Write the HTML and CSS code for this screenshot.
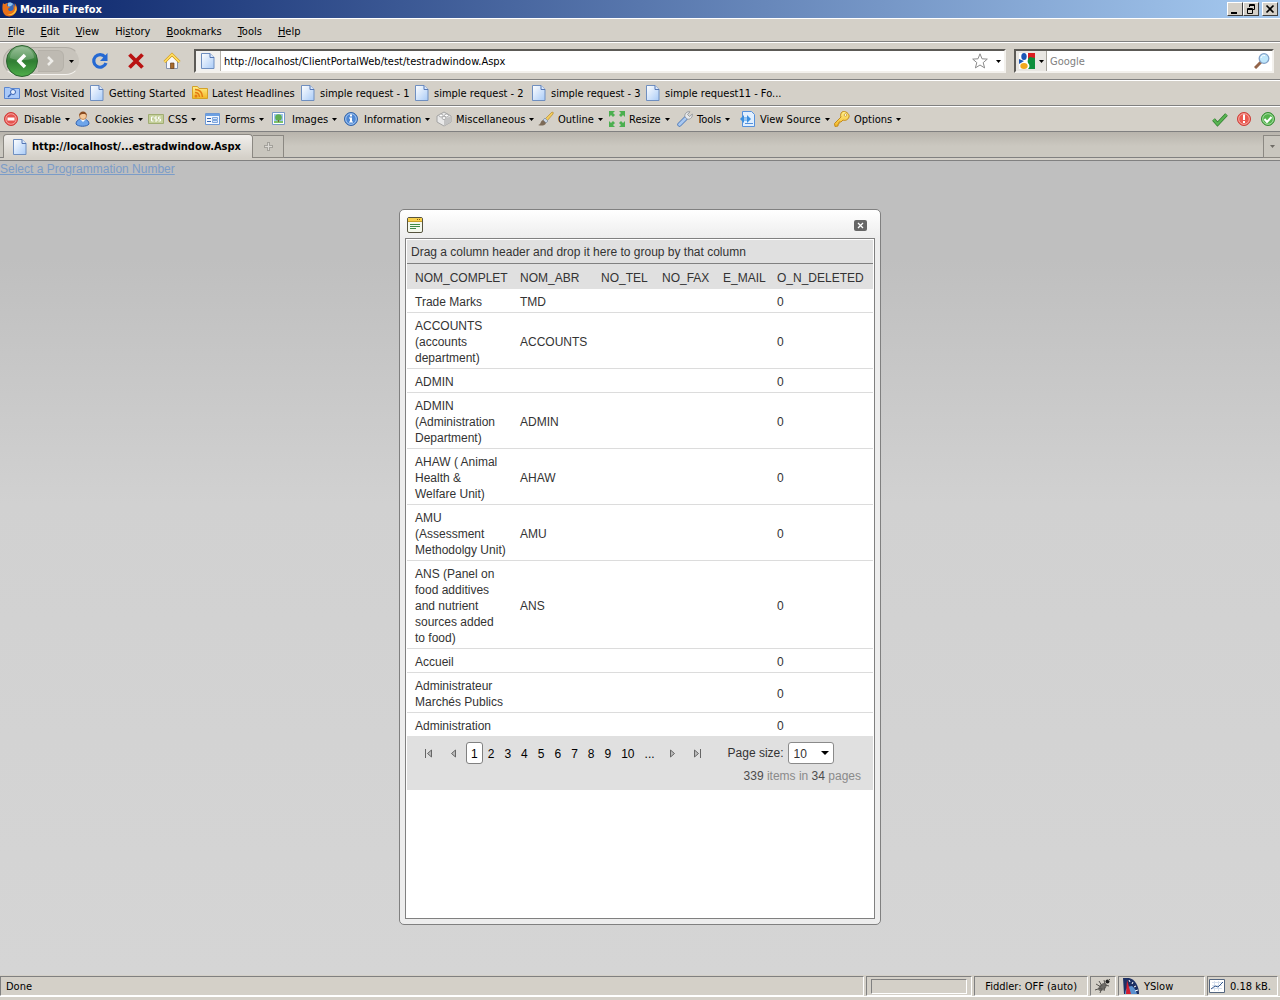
FILE: index.html
```html
<!DOCTYPE html>
<html lang="en">
<head>
    <meta charset="UTF-8">
    <meta name="viewport" content="width=device-width, initial-scale=1.0">
    <title>Mozilla Firefox</title>
    <link rel="stylesheet" href="styles.css">
</head>
<body>
    <!-- shared icons -->
    <svg class="sprite" aria-hidden="true">
        <defs>
            <linearGradient id="g-page" x1="0" y1="0" x2="1" y2="1">
                <stop offset="0" stop-color="#ffffff"/><stop offset="1" stop-color="#a9cbf7"/>
            </linearGradient>
            <linearGradient id="g-green" x1="0" y1="0" x2="0" y2="1">
                <stop offset="0" stop-color="#86b586"/><stop offset=".5" stop-color="#2f7d32"/><stop offset="1" stop-color="#4fae4b"/>
            </linearGradient>
            <linearGradient id="g-gold" x1="0" y1="0" x2="0" y2="1">
                <stop offset="0" stop-color="#fff08a"/><stop offset="1" stop-color="#f3b524"/>
            </linearGradient>
        </defs>
        <symbol id="i-page" viewBox="0 0 16 16">
            <path d="M1.500.5h8.500l4 4v11h-12.500z" fill="url(#g-page)" stroke="#6f8fc0"/>
            <path d="M10 .5v4h4" fill="#dbe9fd" stroke="#5577b5"/>
        </symbol>
        <symbol id="i-down" viewBox="0 0 5 3"><path d="M0 0h5L2.500 3z"/></symbol>
    </svg>

    <!-- title bar -->
    <header class="title-bar">
        <svg class="icon" viewBox="0 0 16 16">
            <circle cx="8" cy="8" r="6.500" fill="#3568b8"/>
            <path d="M6 2c2-1 4 0 5 1l-2 2-3 1z" fill="#8fc3ee"/>
            <path d="M1 2c1 1 1 1 2 1 1-1 2-1 3-1-1 1-1 2-1 3l3 1c0 1-2 1-2 2 0 2 3 3 5 1 1-1 1-3 0-5 2 1 2 2 2 3 1-2 0-4-1-5 3 2 4 6 2 9-2 4-7 6-11 3C0 11 0 6 1 2z" fill="#e8701a"/>
            <path d="M13 4c2 3 2 6 0 8-2 2-5 3-8 1 4 1 7-1 8-4 1-2 0-4 0-5z" fill="#fbc53b"/>
        </svg>
        <span class="title-text">Mozilla Firefox</span>
        <button class="win-btn" aria-label="Minimize"><svg viewBox="0 0 12 10"><path d="M2 8h6v2H2z"/></svg></button>
        <button class="win-btn" aria-label="Restore"><svg viewBox="0 0 12 10"><path d="M4.500 3V.5h5v5H8M4 1.500h6M2.500 4.500h5v5h-5zM2 5.500h6" fill="none" stroke="#000"/></svg></button>
        <button class="win-btn win-close" aria-label="Close"><svg viewBox="0 0 12 10"><path d="M2.500 1.500l7 7M9.500 1.500l-7 7" stroke="#000" stroke-width="1.700"/></svg></button>
    </header>

    <!-- menu bar -->
    <nav class="bar menu-bar">
        <span><u>F</u>ile</span>
        <span><u>E</u>dit</span>
        <span><u>V</u>iew</span>
        <span>Hi<u>s</u>tory</span>
        <span><u>B</u>ookmarks</span>
        <span><u>T</u>ools</span>
        <span><u>H</u>elp</span>
    </nav>

    <!-- navigation bar -->
    <div class="bar nav-bar">
        <div class="history-btns">
            <button class="back" aria-label="Back"><svg viewBox="0 0 32 32">
                <circle cx="16" cy="16" r="15.500" fill="url(#g-green)" stroke="#2c6230"/>
                <path d="M4 13a12 11 0 0 1 24 0c-8 3-16 3-24 0z" fill="#fff" opacity=".2"/>
                <path d="M19 10l-6 6 6 6" fill="none" stroke="#fff" stroke-width="3.500"/></svg></button>
            <button class="forward" aria-label="Forward"><svg viewBox="0 0 10 12"><path d="M2 2l4 4-4 4" fill="none" stroke="#eeede9" stroke-width="2.500"/></svg></button>
            <button class="drop" aria-label="Recent pages"><svg viewBox="0 0 5 3"><path d="M0 0h5L2.500 3z"/></svg></button>
        </div>
        <button class="nav-btn" aria-label="Reload"><svg viewBox="0 0 18 18">
            <path d="M14 5A6.300 6.300 0 1 0 15 11" fill="none" stroke="#2569d3" stroke-width="3.200"/><path d="M16.500 1v8H9z" fill="#2569d3"/></svg></button>
        <button class="nav-btn" aria-label="Stop"><svg viewBox="0 0 18 18">
            <path d="M2.500 2.500l13 13M15.500 2.500l-13 13" stroke="#b91212" stroke-width="3.800"/></svg></button>
        <button class="nav-btn" aria-label="Home"><svg viewBox="0 0 18 18">
            <path d="M3.500 9L9 4l5.500 5v7.500h-11z" fill="#f7f7fb" stroke="#8593ad"/>
            <path d="M7.500 11h3.500v5.500H7.500z" fill="#a86b2d" stroke="#6c411b" stroke-width=".7"/>
            <path d="M1.500 10L9 2.500 16.500 10" fill="none" stroke="#d39a1c" stroke-width="3"/><path d="M1.500 10L9 2.500 16.500 10" fill="none" stroke="#ffdf62" stroke-width="1.700"/></svg></button>
        <div class="field url-field">
            <span class="site-icon"><svg class="icon"><use href="#i-page"/></svg></span>
            <input type="text" aria-label="Address" value="http://localhost/ClientPortalWeb/test/testradwindow.Aspx">
            <svg class="icon star" viewBox="0 0 16 16"><path d="M8 .8l2 5 5.300.3-4.100 3.500 1.400 5.300L8 12l-4.600 2.900 1.400-5.300L.7 6.100 6 5.800z" fill="#fff" stroke="#8b8b8b"/></svg>
            <button class="drop" aria-label="Show history"><svg viewBox="0 0 5 3"><path d="M0 0h5L2.500 3z"/></svg></button>
        </div>
        <div class="field search-field">
            <button class="engine" aria-label="Search engine">
                <svg class="icon" viewBox="0 0 16 16">
                    <path d="M0 0h16v16H0z" fill="#fff"/>
                    <path d="M9 0h7v6H9z" fill="#dc1c20"/><path d="M16 5v11H9c2-2 2-4 0-6-1-2 0-5 2-6z" fill="#0d8f3c"/>
                    <ellipse cx="5" cy="3.500" rx="2.700" ry="3.500" fill="#1b55b5"/><path d="M0 6l5 2-5 3z" fill="#1b55b5"/>
                    <ellipse cx="5" cy="13" rx="3.700" ry="3" fill="#f2a81d"/>
                </svg>
                <svg class="arrow"><use href="#i-down"/></svg>
            </button>
            <input type="text" aria-label="Search" placeholder="Google">
            <svg class="icon lens" viewBox="0 0 16 16"><path d="M1 15l6-6" stroke="#936449" stroke-width="3"/><circle cx="10" cy="5.500" r="4.800" fill="#bfe7fb" stroke="#83a2c8" stroke-width="1.300"/><path d="M7 5a3 3 0 0 1 4-2.500" stroke="#fff" fill="none"/></svg>
        </div>
    </div>

    <!-- bookmarks -->
    <nav class="bar bookmarks">
        <button><svg class="icon" viewBox="0 0 16 16"><path d="M.5 2.500h5l1.500 1h8.500v10H.5z" fill="#a9c9f8" stroke="#5b86cf"/><circle cx="9" cy="7" r="2.500" fill="#e7f1fe" stroke="#3864b5"/><path d="M7 9l-3 3" stroke="#3864b5" stroke-width="1.500"/></svg>Most Visited</button>
        <button><svg class="icon"><use href="#i-page"/></svg>Getting Started</button>
        <button><svg class="icon" viewBox="0 0 16 16"><path d="M.5 1.500h5l1.500 2h8.500v10H.5z" fill="url(#g-gold)" stroke="#d4a128"/><circle cx="4" cy="11" r="1.500" fill="#e47a13"/><path d="M3 7.500q4 0 4.500 4.500M3 4.500q7 0 7.500 7.500" fill="none" stroke="#e47a13" stroke-width="1.500"/></svg>Latest Headlines</button>
        <button><svg class="icon"><use href="#i-page"/></svg>simple request - 1</button>
        <button><svg class="icon"><use href="#i-page"/></svg>simple request - 2</button>
        <button><svg class="icon"><use href="#i-page"/></svg>simple request - 3</button>
        <button><svg class="icon"><use href="#i-page"/></svg>simple request11 - Fo...</button>
    </nav>

    <!-- web developer toolbar -->
    <div class="bar dev-bar">
        <button><svg class="icon" viewBox="0 0 16 16"><circle cx="7" cy="8" r="6.500" fill="#e65450" stroke="#cf3937"/><circle cx="7" cy="8" r="5.200" fill="none" stroke="#f5a29d"/><path d="M3.500 6.500h7v3h-7z" fill="#fff"/></svg>Disable<svg class="arrow"><use href="#i-down"/></svg></button>
        <button><svg class="icon" viewBox="0 0 16 16"><path d="M1 13c0-3 2-4 4-5h5c2 1 4 2 4 5-2 3-11 3-13 0z" fill="#6ea5ea" stroke="#3463b0"/><path d="M5 8l3 3 3-3z" fill="#fff"/><circle cx="8" cy="5" r="3.500" fill="#f5c898" stroke="#a96b3a" stroke-width=".7"/><path d="M4 5c0-6 8-6 8 0-1-2-2-2-3-2-2 0-3 0-5 2z" fill="#8a4b20"/></svg>Cookies<svg class="arrow"><use href="#i-down"/></svg></button>
        <button><svg class="icon" viewBox="0 0 16 16"><path d="M.5 3.500h15v9H.5z" fill="#c4cf9a" stroke="#a0ad72"/><path d="M5.500 6h-2v4h2M9 6H7v2h2v2H7M12.500 6h-2v2h2v2h-2" fill="none" stroke="#fff"/></svg>CSS<svg class="arrow"><use href="#i-down"/></svg></button>
        <button><svg class="icon" viewBox="0 0 16 16"><path d="M.5 2.500h14v11H.5z" fill="#f5f9ff" stroke="#6d98d4"/><path d="M1 3h13v2H1z" fill="#6ca0e2"/><path d="M2 7.500h4M2 10.500h4" stroke="#3565b2"/><path d="M7.500 6.500h5v2h-5zM7.500 9.500h5v2h-5z" fill="#d3e4fa" stroke="#7ea6dd"/></svg>Forms<svg class="arrow"><use href="#i-down"/></svg></button>
        <button><svg class="icon" viewBox="0 0 16 16"><path d="M.5 1.500h12v12H.5z" fill="#fff" stroke="#7899c8"/><path d="M2 3h9v9H2z" fill="#9cc4ed"/><circle cx="6.500" cy="6.500" r="3.300" fill="#5fae52"/><path d="M2 10h9v2H2z" fill="#7cc36a"/><path d="M6 9h1v2H6z" fill="#7b5c35"/></svg>Images<svg class="arrow"><use href="#i-down"/></svg></button>
        <button><svg class="icon" viewBox="0 0 16 16"><circle cx="7" cy="8" r="6.500" fill="#4f88d3" stroke="#3464a7"/><circle cx="7" cy="8" r="5.300" fill="none" stroke="#a6c8f3"/><path d="M6 3.500h2v2H6zM5 6.500h3v4h1v1H5v-1h1v-3H5z" fill="#fff"/></svg>Information<svg class="arrow"><use href="#i-down"/></svg></button>
        <button><svg class="icon" viewBox="0 0 16 16"><path d="M1 5l7-4 7 4v6l-7 4-7-4z" fill="#e9e9e9" stroke="#a3a3a3"/><path d="M8 8.500l7-3.500v6l-7 4z" fill="#c2c2c2"/><ellipse cx="5" cy="4.500" rx="2" ry="1.500" fill="#fff" stroke="#aaa"/><ellipse cx="10.500" cy="4.500" rx="2" ry="1.500" fill="#fff" stroke="#aaa"/><ellipse cx="8" cy="7" rx="2" ry="1.500" fill="#fff" stroke="#aaa"/></svg>Miscellaneous<svg class="arrow"><use href="#i-down"/></svg></button>
        <button><svg class="icon" viewBox="0 0 16 16"><path d="M7 8l7-7q2 0 1 2L9 10z" fill="#f3cb5f" stroke="#b28b34" stroke-width=".7"/><path d="M5 9l2-2 3 3-2 2z" fill="#c7d3e2" stroke="#7d8ca0" stroke-width=".7"/><path d="M0 14c3 0 2-4 5-5l3 3c-1 3-5 3-8 2z" fill="#7c6a57"/></svg>Outline<svg class="arrow"><use href="#i-down"/></svg></button>
        <button><svg class="icon" viewBox="0 0 16 16"><g fill="#4caf50"><path d="M0 0h6L4 2l2 2-2 2-2-2-2 2zM16 0v6l-2-2-2 2-2-2 2-2-2-2zM0 16v-6l2 2 2-2 2 2-2 2 2 2zM16 16h-6l2-2-2-2 2-2 2 2 2-2z"/></g></svg>Resize<svg class="arrow"><use href="#i-down"/></svg></button>
        <button><svg class="icon" viewBox="0 0 16 16"><path d="M2.500 13.500l6-6" stroke="#527cb9" stroke-width="4.500" stroke-linecap="round"/><path d="M2.500 13.500l6-6" stroke="#a9c8f0" stroke-width="2.800" stroke-linecap="round"/><path d="M13 .8L10.500 3.500l2 2L15.300 3c.5 3-2 6-5 5L8 6c-1-3 2-6 5-5.200z" fill="#e7e9ec" stroke="#8a8f96" stroke-width=".8"/></svg>Tools<svg class="arrow"><use href="#i-down"/></svg></button>
        <button><svg class="icon" viewBox="0 0 16 16"><path d="M2.500.5h9l3 3v12h-12z" fill="#e1effe" stroke="#5591dc"/><path d="M5 12.500h8" stroke="#5591dc"/><path d="M0 8l4-4v2.500h3V4l4 4-4 4V9.500H4V12z" fill="#3a8fe0"/><path d="M4 8h3" stroke="#fff"/></svg>View Source<svg class="arrow"><use href="#i-down"/></svg></button>
        <button><svg class="icon" viewBox="0 0 16 16"><path d="M8 1c3-2 8 2 7 5-1 3-4 4-6 3l-2 2H5v2H4v2l-3 .5-.5-3L7 6c-1-2 0-4 1-5z" fill="url(#g-gold)" stroke="#c38a1a"/><circle cx="11.500" cy="4" r="1.300" fill="#fff" stroke="#c38a1a" stroke-width=".7"/></svg>Options<svg class="arrow"><use href="#i-down"/></svg></button>
        <div class="page-checks">
            <svg class="icon" viewBox="0 0 16 16"><path d="M1.500 8.500l4 4.500 9-9.500" fill="none" stroke="#2f7d2d" stroke-width="3.600"/><path d="M1.500 8.500l4 4.500 9-9.500" fill="none" stroke="#59b453" stroke-width="2.200"/></svg>
            <svg class="icon" viewBox="0 0 16 16"><circle cx="8" cy="8" r="6.500" fill="#ea5a51" stroke="#cc3e38"/><circle cx="8" cy="8" r="5.300" fill="none" stroke="#f6aaa3"/><path d="M7 3.500h2V9H7zM7 10h2v2H7z" fill="#fff"/></svg>
            <svg class="icon" viewBox="0 0 16 16"><circle cx="8" cy="8" r="6.500" fill="#53b44d" stroke="#378b34"/><circle cx="8" cy="8" r="5.300" fill="none" stroke="#a6dba2"/><path d="M4.500 8l2.500 3 4.500-5" fill="none" stroke="#fff" stroke-width="2"/></svg>
        </div>
    </div>

    <!-- tabs -->
    <div class="tab-bar">
        <button class="tab"><svg class="icon"><use href="#i-page"/></svg>http://localhost/...estradwindow.Aspx</button>
        <button class="new-tab" aria-label="New tab"><svg viewBox="0 0 9 9"><path d="M3.500.5h2v3h3v2h-3v3h-2v-3h-3v-2h3z" fill="#dcdad5" stroke="#77756f" stroke-dasharray="1 1"/></svg></button>
        <button class="all-tabs" aria-label="List all tabs"><svg class="arrow"><use href="#i-down"/></svg></button>
    </div>

    <main class="page">
        <a class="open-link" href="#">Select a Programmation Number</a>

        <section class="rad-window">
            <div class="rad-title">
                <svg class="icon" viewBox="0 0 16 16">
                    <rect x=".5" y=".5" width="15" height="15" rx="1.500" fill="#f4f8ec" stroke="#57543f"/>
                    <path d="M1 1h14v4H1z" fill="#f7cf4b"/><path d="M1 4.500h14" stroke="#c99f29"/><path d="M10 2.500h1M12 2.500h1" stroke="#875d10"/>
                    <path d="M3 7.500h10M3 9.500h10M3 11.500h6" stroke="#3f8a45"/>
                </svg>
                <button class="rad-close" aria-label="Close window"><svg viewBox="0 0 13 11"><rect width="13" height="11" rx="2" fill="#666"/><path d="M4 3l5 5M9 3L4 8" stroke="#fff" stroke-width="1.300"/></svg></button>
            </div>
            <div class="rad-content">
                <div class="grid">
                    <div class="group-panel">Drag a column header and drop it here to group by that column</div>
                    <table>
                        <colgroup>
                            <col class="col-name"><col class="col-abr"><col class="col-contact"><col class="col-contact"><col class="col-mail"><col>
                        </colgroup>
                        <thead>
                            <tr>
                                <th>NOM_COMPLET</th>
                                <th>NOM_ABR</th>
                                <th>NO_TEL</th>
                                <th>NO_FAX</th>
                                <th>E_MAIL</th>
                                <th>O_N_DELETED</th>
                            </tr>
                        </thead>
                        <tbody>
                            <tr><td>Trade Marks</td><td>TMD</td><td></td><td></td><td></td><td>0</td></tr>
                            <tr><td>ACCOUNTS (accounts department)</td><td>ACCOUNTS</td><td></td><td></td><td></td><td>0</td></tr>
                            <tr><td>ADMIN</td><td></td><td></td><td></td><td></td><td>0</td></tr>
                            <tr><td>ADMIN (Administration Department)</td><td>ADMIN</td><td></td><td></td><td></td><td>0</td></tr>
                            <tr><td>AHAW ( Animal Health &amp; Welfare&nbsp;Unit)</td><td>AHAW</td><td></td><td></td><td></td><td>0</td></tr>
                            <tr><td>AMU (Assessment Methodolgy Unit)</td><td>AMU</td><td></td><td></td><td></td><td>0</td></tr>
                            <tr><td>ANS (Panel on food additives and nutrient sources added to food)</td><td>ANS</td><td></td><td></td><td></td><td>0</td></tr>
                            <tr><td>Accueil</td><td></td><td></td><td></td><td></td><td>0</td></tr>
                            <tr><td>Administrateur Marchés Publics</td><td></td><td></td><td></td><td></td><td>0</td></tr>
                            <tr><td>Administration</td><td></td><td></td><td></td><td></td><td>0</td></tr>
                        </tbody>
                    </table>
                    <div class="pager">
                        <div class="pager-row">
                            <button class="pager-arrow" aria-label="First page"><svg viewBox="0 0 9 9"><path d="M1.500 0v9" stroke="#666"/><path d="M7.500 1v7L3.500 4.500z" fill="#bbb" stroke="#666"/></svg></button>
                            <button class="pager-arrow" aria-label="Previous page"><svg viewBox="0 0 9 9"><path d="M6.500 1v7L2.500 4.500z" fill="#bbb" stroke="#666"/></svg></button>
                            <div class="pager-numbers">
                                <a class="current" href="#">1</a><a href="#">2</a><a href="#">3</a><a href="#">4</a><a href="#">5</a><a href="#">6</a><a href="#">7</a><a href="#">8</a><a href="#">9</a><a href="#">10</a><a href="#">...</a>
                            </div>
                            <button class="pager-arrow" aria-label="Next page"><svg viewBox="0 0 9 9"><path d="M2.500 1v7l4-3.500z" fill="#bbb" stroke="#666"/></svg></button>
                            <button class="pager-arrow" aria-label="Last page"><svg viewBox="0 0 9 9"><path d="M7.500 0v9" stroke="#666"/><path d="M1.500 1v7l4-3.500z" fill="#bbb" stroke="#666"/></svg></button>
                            <label for="page-size">Page size:</label>
                            <div class="select-box">
                                <select id="page-size"><option>10</option><option>20</option><option>50</option></select>
                                <svg viewBox="0 0 8 4"><path d="M0 0h8L4 4z"/></svg>
                            </div>
                        </div>
                        <div class="pager-info"><b>339</b> items in <b>34</b> pages</div>
                    </div>
                </div>
            </div>
        </section>
    </main>

    <!-- status bar -->
    <footer class="status-bar">
        <div class="panel status-text">Done</div>
        <div class="panel progress-panel"><div class="progress"></div></div>
        <div class="panel">Fiddler: OFF (auto)</div>
        <div class="panel bug-panel"><svg class="icon" viewBox="0 0 16 16"><ellipse cx="7.500" cy="9" rx="3" ry="5" transform="rotate(50 7.500 9)" fill="#6d6b67"/><circle cx="12.500" cy="3.500" r="2" fill="#222"/><path d="M1 6l5 3M4 3l3 5M0 12l6-2M5 15l2-5M9 13l1-4M14 8l-4-1M9 2l1 4M15 1l-2 2" stroke="#55534f"/></svg></div>
        <div class="panel yslow-panel"><svg class="icon" viewBox="0 0 16 16"><path d="M0 0h6c6 1 10 8 10 16H1z" fill="#1c2f64"/><path d="M2 16c0-5 3-8 7-8 3 2 4 5 5 8z" fill="#5b91cf"/><path d="M4 2l4 14H3z" fill="#d31f31"/><path d="M6 2l1 2M10 4L9 6M13 8l-2 1M15 12l-3 1" stroke="#fff"/></svg>YSlow</div>
        <div class="panel size-panel"><svg class="icon" viewBox="0 0 16 16"><path d="M.5 1.500h15v13H.5z" fill="#fff" stroke="#53657f"/><path d="M3 4.500h10M3 7.500h10M3 10.500h10M5.500 3v10M9.500 3v10" stroke="#d6e0ee"/><path d="M2 11l4-3 3 1 5-5" fill="none" stroke="#36598e"/></svg>0.18 kB.</div>
    </footer>
</body>
</html>
```
FILE: styles.css
```css
* {
    box-sizing: border-box;
}

body {
    margin: 0;
    min-height: 100vh;
    display: flex;
    flex-direction: column;
    background: #d4d0c8;
    color: #000;
    font-family: Tahoma, "DejaVu Sans Condensed", sans-serif;
    font-size: 11px;
    line-height: 15px;
}

button {
    margin: 0;
    padding: 0;
    border: none;
    background: none;
    color: inherit;
    font: inherit;
}

svg {
    display: block;
    flex: none;
}

.sprite {
    position: absolute;
    width: 0;
    height: 0;
}

.icon {
    width: 16px;
    height: 16px;
}

.arrow {
    width: 5px;
    height: 3px;
}

/* Title bar */
.title-bar {
    display: flex;
    align-items: center;
    height: 18px;
    padding: 0 2px;
    background: linear-gradient(to right, #0a246a, #a6caf0);
    color: #fff;
    font-weight: bold;
}

.title-text {
    flex: 1;
    padding-left: 2px;
}

.win-btn {
    width: 16px;
    height: 14px;
    padding: 1px;
    background: #d4d0c8;
    border: 1px solid;
    border-color: #fff #404040 #404040 #fff;
}

.win-btn svg {
    width: 12px;
    height: 10px;
}

.win-close {
    margin-left: 3px;
}

/* Toolbars */
.bar {
    display: flex;
    align-items: center;
    border-top: 1px solid #fff;
    border-bottom: 1px solid #808080;
}

.menu-bar {
    height: 24px;
    gap: 16px;
    padding: 2px 8px 0;
}

.nav-bar {
    height: 38px;
    padding: 0 6px 0 3px;
}

.history-btns {
    display: flex;
    align-items: center;
    width: 77px;
    height: 28px;
    border: 1px solid;
    border-color: #b1ada5 #d4d0c8 #f4f2ee #b1ada5;
    border-radius: 14px;
    background: #c8c4bc;
}

.back,
.back svg {
    width: 32px;
    height: 32px;
}

.back {
    margin-left: 2px;
}

.forward {
    display: grid;
    place-items: center;
    width: 28px;
    height: 22px;
    border: 1px solid #b5b1a9;
    border-left: none;
    border-radius: 0 6px 6px 0;
    background: #bebab2;
}

.forward svg {
    width: 10px;
    height: 12px;
}

.drop {
    display: grid;
    place-items: center;
    width: 16px;
    height: 20px;
}

.drop svg {
    width: 5px;
    height: 3px;
}

.nav-btn {
    width: 36px;
    height: 24px;
    display: grid;
    place-items: center;
}

.nav-btn:first-of-type {
    margin-left: 2px;
}

.nav-btn svg {
    width: 18px;
    height: 18px;
}

.field {
    display: flex;
    align-items: center;
    height: 24px;
    background: #fff;
    border: 2px solid;
    border-color: #5c5a56 #f3f1ed #f3f1ed #5c5a56;
}

.field input {
    flex: 1;
    min-width: 0;
    padding: 1px 3px 0;
    border: none;
    outline: none;
    background: none;
    font: inherit;
}

.field input::placeholder {
    color: #808080;
    opacity: 1;
}

.star {
    margin-right: 4px;
}

.lens {
    margin-right: 2px;
}

.url-field {
    flex: 1;
    margin-left: 4px;
}

.site-icon {
    display: grid;
    place-items: center;
    width: 25px;
    height: 20px;
    background: #f2f1ef;
    border-right: 1px solid #b5b2ab;
}

.url-field .drop {
    width: 12px;
}

.search-field {
    width: 260px;
    margin-left: 8px;
}

.engine {
    display: flex;
    align-items: center;
    gap: 4px;
    width: 31px;
    height: 20px;
    padding-left: 3px;
    background: #e8e6e2;
    border-right: 1px solid #a5a29b;
}

.bookmarks,
.dev-bar {
    display: grid;
    height: 26px;
    padding: 0 4px;
}

.bookmarks {
    grid-template-columns: 85px 103px 108px 114px 117px 114px 1fr;
}

.dev-bar {
    grid-template-columns: 71px 73px 57px 67px 72px 92px 102px 71px 68px 63px 94px 1fr auto;
}

.bookmarks button,
.dev-bar button {
    display: flex;
    align-items: center;
    gap: 4px;
    white-space: nowrap;
}

.page-checks {
    display: flex;
    gap: 8px;
}

/* Tabs */
.tab-bar {
    display: flex;
    align-items: flex-end;
    height: 29px;
    padding-left: 3px;
    background: linear-gradient(#b8b4ac, #cbc8c0 14px);
    border-bottom: 1px solid #808080;
    box-shadow: inset 0 -2px #d4d0c8, inset 0 -3px #808080;
}

.tab {
    display: flex;
    align-items: center;
    gap: 4px;
    width: 250px;
    height: 24px;
    margin-bottom: 2px;
    padding: 0 4px 0 8px;
    background: linear-gradient(#f1efec, #d4d0c8);
    border: 1px solid #8b8882;
    border-bottom: none;
    border-radius: 4px 4px 0 0;
    font-weight: bold;
    white-space: nowrap;
}

.new-tab,
.all-tabs {
    display: grid;
    place-items: center;
    height: 23px;
    margin-bottom: 2px;
    background: #c9c6be;
    border: 1px solid #8b8882;
}

.new-tab {
    width: 31px;
    border-left: none;
}

.new-tab svg {
    width: 9px;
    height: 9px;
}

.all-tabs {
    width: 17px;
    margin-left: auto;
    border-right: none;
}

.all-tabs .arrow {
    fill: #6f6c66;
}

/* Page */
.page {
    flex: 1;
    display: flex;
    flex-direction: column;
    padding-bottom: 50px;
    background: linear-gradient(#bfbfbf 12%, #d1d1d1 42%, #d5d5d5);
    color: #333;
    font-family: "Liberation Sans", Arial, sans-serif;
    font-size: 12px;
    line-height: 16px;
}

.open-link {
    align-self: flex-start;
    color: #7b9cc8;
}

/* Popup window */
.rad-window {
    flex: 1;
    display: flex;
    flex-direction: column;
    width: 482px;
    margin: 32px auto 0;
    padding: 0 5px 5px;
    background: linear-gradient(#fff, #ededed 28px);
    border: 1px solid #808080;
    border-radius: 5px;
}

.rad-title {
    display: flex;
    align-items: center;
    justify-content: space-between;
    height: 28px;
    padding: 2px 8px 0 2px;
}

.rad-close,
.rad-close svg {
    width: 13px;
    height: 11px;
}

.rad-content {
    flex: 1;
    padding: 1px;
    background: #fff;
    border: 1px solid #808080;
}

.group-panel {
    height: 24px;
    padding: 4px;
    background: #e0e0e0;
    border-bottom: 1px solid #808080;
}

table {
    width: 100%;
    table-layout: fixed;
    border-collapse: separate;
    border-spacing: 0;
}

.col-name {
    width: 106px;
}

.col-abr {
    width: 81px;
}

.col-contact {
    width: 61px;
}

.col-mail {
    width: 54px;
}

th,
td {
    text-align: left;
    padding: 5px 6px 2px 7px;
}

th {
    padding: 6px 0 3px 7px;
    background: #e0e0e0;
    font-weight: normal;
}

th:first-child,
td:first-child {
    padding-left: 8px;
}

td {
    border-bottom: 1px solid #dcdcdc;
}

tr:last-child td {
    border-bottom: none;
}

/* Pager */
.pager {
    padding: 6px 12px 6px 9px;
    background: #e0e0e0;
}

.pager-row {
    display: flex;
    align-items: center;
    color: #000;
}

.pager-arrow {
    display: grid;
    place-items: center;
    width: 25px;
    height: 22px;
}

.pager-arrow svg {
    width: 9px;
    height: 9px;
}

.pager-numbers {
    display: flex;
}

.pager-numbers a {
    padding: 4px 5px 2px;
    color: #000;
    text-decoration: none;
}

.pager-numbers .current {
    padding: 3px 4px 1px;
    background: #fff;
    border: 1px solid #808080;
    border-radius: 3px;
}

.pager label {
    margin: 0 4px 0 18px;
    color: #333;
}

.select-box {
    position: relative;
}

.select-box select {
    display: block;
    width: 46px;
    height: 22px;
    padding: 1px 5px 0;
    appearance: none;
    background: #fff;
    border: 1px solid #8a8a8a;
    border-radius: 3px;
    color: #333;
    font: inherit;
}

.select-box svg {
    position: absolute;
    top: 9px;
    right: 5px;
    width: 8px;
    height: 4px;
    pointer-events: none;
}

.pager-info {
    margin-top: 4px;
    color: #8a8a8a;
    text-align: right;
}

.pager-info b {
    color: #4c4c4c;
    font-weight: normal;
}

/* Status bar */
.status-bar {
    display: flex;
    gap: 2px;
    height: 25px;
    padding: 1px 2px 3px 0;
    box-shadow: inset 0 -3px #d4d0c8, inset 0 -4px #fff;
}

.panel {
    display: flex;
    align-items: center;
    gap: 5px;
    height: 20px;
    padding: 0 10px;
    border: 1px solid;
    border-color: #808080 #fff #fff #808080;
    white-space: nowrap;
}

.status-text {
    flex: 1;
    padding: 0 5px;
}

.progress-panel {
    width: 106px;
    padding: 0 4px;
}

.progress {
    flex: 1;
    height: 15px;
    border: 1px solid;
    border-color: #808080 #fff #fff #808080;
}

.bug-panel {
    padding: 0 4px;
}

.yslow-panel {
    width: 87px;
    padding: 0 4px;
}

.size-panel {
    width: 71px;
    padding: 0 1px;
}
```
